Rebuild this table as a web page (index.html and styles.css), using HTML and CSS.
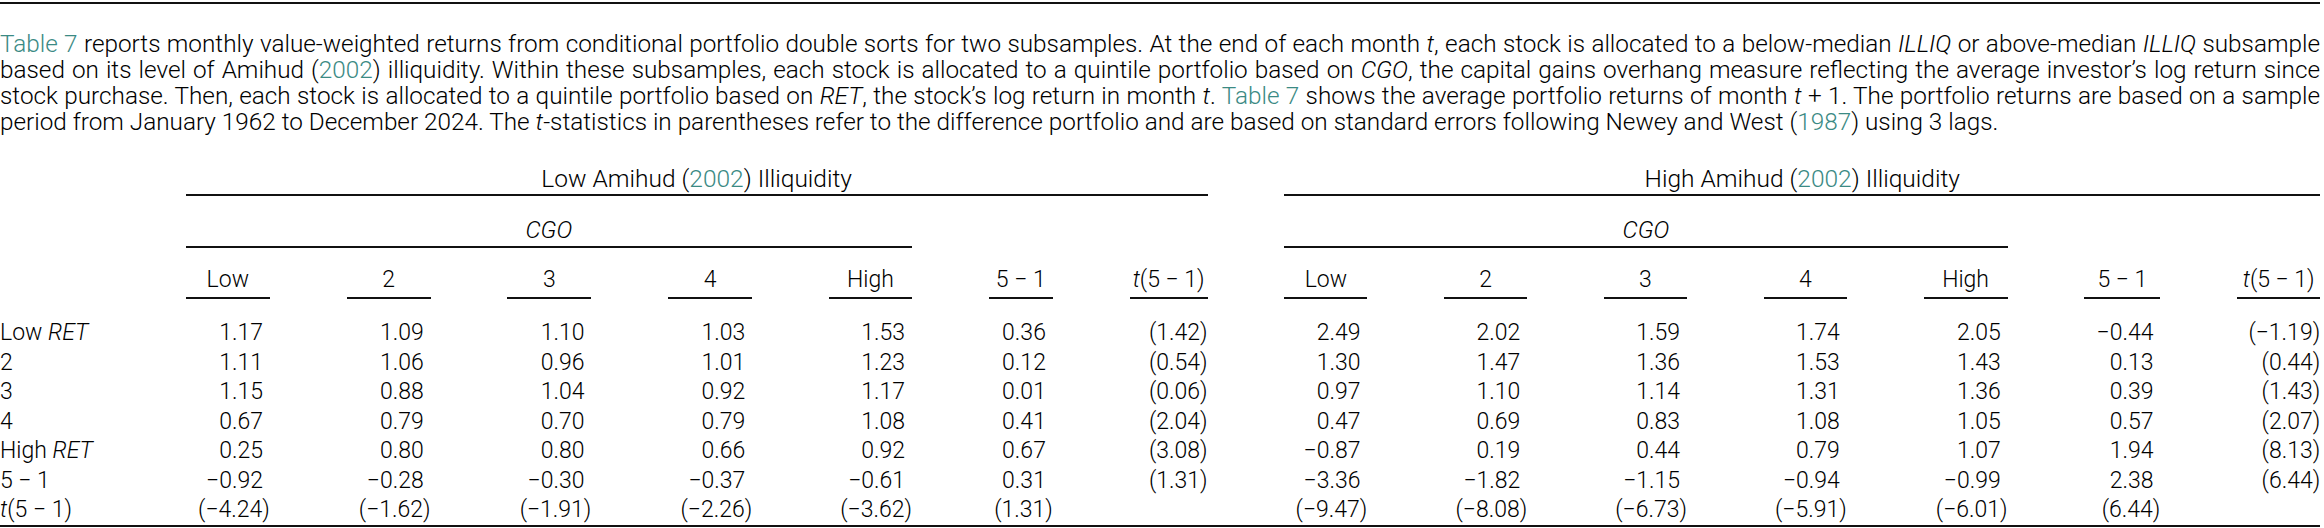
FILE: index.html
```html
<!DOCTYPE html>
<html lang="en">
<head>
<meta charset="utf-8">
<title>Table 7</title>
<link rel="stylesheet" href="styles.css">
</head>
<body>
<div class="page">
  <p class="caption">
    <span class="ln"><a class="ref">Table 7</a> reports monthly value-weighted returns from conditional portfolio double sorts for two subsamples. At the end of each month <i>t</i>, each stock is allocated to a below-median <i>ILLIQ</i> or above-median <i>ILLIQ</i> subsample</span>
    <span class="ln">based on its level of Amihud (<a class="ref">2002</a>) illiquidity. Within these subsamples, each stock is allocated to a quintile portfolio based on <i>CGO</i>, the capital gains overhang measure reflecting the average investor’s log return since</span>
    <span class="ln">stock purchase. Then, each stock is allocated to a quintile portfolio based on <i>RET</i>, the stock’s log return in month <i>t</i>. <a class="ref">Table 7</a> shows the average portfolio returns of month <i>t</i> + 1. The portfolio returns are based on a sample</span>
    <span class="ln last">period from January 1962 to December 2024. The <i>t</i>-statistics in parentheses refer to the difference portfolio and are based on standard errors following Newey and West (<a class="ref">1987</a>) using 3 lags.</span>
  </p>

  <div class="tbl">
    <div class="grp-row blank"></div>
    <div class="grp span-l">Low Amihud (<a class="ref">2002</a>) Illiquidity</div>
    <div class="grp span-r">High Amihud (<a class="ref">2002</a>) Illiquidity</div>

    <div class="cgo-row blank"></div>
    <div class="cgo cgo-l"><i>CGO</i></div>
    <div class="cgo-row blank gap-l"></div>
    <div class="cgo cgo-r"><i>CGO</i></div>
    <div class="cgo-row blank gap-r"></div>

    <div class="hd-row blank"></div>
    <div class="hd">Low</div><div class="hd">2</div><div class="hd">3</div><div class="hd">4</div><div class="hd">High</div><div class="hd">5 − 1</div><div class="hd"><i>t</i>(5 − 1)</div>
    <div class="hd">Low</div><div class="hd">2</div><div class="hd">3</div><div class="hd">4</div><div class="hd">High</div><div class="hd">5 − 1</div><div class="hd"><i>t</i>(5 − 1)</div>

    <div class="lb first">Low <i>RET</i></div>
    <div class="n first">1.17</div><div class="n first">1.09</div><div class="n first">1.10</div><div class="n first">1.03</div><div class="n first">1.53</div><div class="n first">0.36</div><div class="n pr first">(1.42)</div>
    <div class="n first">2.49</div><div class="n first">2.02</div><div class="n first">1.59</div><div class="n first">1.74</div><div class="n first">2.05</div><div class="n first">−0.44</div><div class="n pr first">(−1.19)</div>

    <div class="lb">2</div>
    <div class="n">1.11</div><div class="n">1.06</div><div class="n">0.96</div><div class="n">1.01</div><div class="n">1.23</div><div class="n">0.12</div><div class="n pr">(0.54)</div>
    <div class="n">1.30</div><div class="n">1.47</div><div class="n">1.36</div><div class="n">1.53</div><div class="n">1.43</div><div class="n">0.13</div><div class="n pr">(0.44)</div>

    <div class="lb">3</div>
    <div class="n">1.15</div><div class="n">0.88</div><div class="n">1.04</div><div class="n">0.92</div><div class="n">1.17</div><div class="n">0.01</div><div class="n pr">(0.06)</div>
    <div class="n">0.97</div><div class="n">1.10</div><div class="n">1.14</div><div class="n">1.31</div><div class="n">1.36</div><div class="n">0.39</div><div class="n pr">(1.43)</div>

    <div class="lb">4</div>
    <div class="n">0.67</div><div class="n">0.79</div><div class="n">0.70</div><div class="n">0.79</div><div class="n">1.08</div><div class="n">0.41</div><div class="n pr">(2.04)</div>
    <div class="n">0.47</div><div class="n">0.69</div><div class="n">0.83</div><div class="n">1.08</div><div class="n">1.05</div><div class="n">0.57</div><div class="n pr">(2.07)</div>

    <div class="lb">High <i>RET</i></div>
    <div class="n">0.25</div><div class="n">0.80</div><div class="n">0.80</div><div class="n">0.66</div><div class="n">0.92</div><div class="n">0.67</div><div class="n pr">(3.08)</div>
    <div class="n">−0.87</div><div class="n">0.19</div><div class="n">0.44</div><div class="n">0.79</div><div class="n">1.07</div><div class="n">1.94</div><div class="n pr">(8.13)</div>

    <div class="lb">5 − 1</div>
    <div class="n">−0.92</div><div class="n">−0.28</div><div class="n">−0.30</div><div class="n">−0.37</div><div class="n">−0.61</div><div class="n">0.31</div><div class="n pr">(1.31)</div>
    <div class="n">−3.36</div><div class="n">−1.82</div><div class="n">−1.15</div><div class="n">−0.94</div><div class="n">−0.99</div><div class="n">2.38</div><div class="n pr">(6.44)</div>

    <div class="lb"><i>t</i>(5 − 1)</div>
    <div class="n pr">(−4.24)</div><div class="n pr">(−1.62)</div><div class="n pr">(−1.91)</div><div class="n pr">(−2.26)</div><div class="n pr">(−3.62)</div><div class="n pr">(1.31)</div><div class="n pr"></div>
    <div class="n pr">(−9.47)</div><div class="n pr">(−8.08)</div><div class="n pr">(−6.73)</div><div class="n pr">(−5.91)</div><div class="n pr">(−6.01)</div><div class="n pr">(6.44)</div><div class="n pr"></div>
  </div>
</div>
</body>
</html>
```

FILE: styles.css
```css
html, body {
  margin: 0;
  padding: 0;
  background: #ffffff;
}

body {
  font-family: Roboto, "Liberation Sans", Arial, sans-serif;
  font-weight: 300;
  color: #000000;
}

.page {
  width: 2320px;
  margin-top: 2px;
  border-top: 2px solid #111;
}

.caption {
  margin: 0;
  padding-top: 26.6px;
  font-size: 24.3px;
  line-height: 26px;
}

.caption .ln {
  display: block;
  text-align: justify;
  text-align-last: justify;
}

.caption .ln.last {
  text-align-last: left;
}

.ref {
  color: #3b8a84;
  text-decoration: none;
}

.tbl {
  display: grid;
  grid-template-columns: 109px 84px 84px 84px 84px 83px 64px 78px 83px 83px 83px 83px 84px 76px 83px;
  column-gap: 76.8px;
  margin-top: 31px;
  font-size: 23px;
  border-bottom: 2px solid #111;
}

.blank {
  min-height: 1px;
}

.grp {
  font-size: 24.5px;
  line-height: 26px;
  text-align: center;
  padding-bottom: 2px;
  border-bottom: 2px solid #111;
}

.span-l { grid-column: 2 / 9; }
.span-r { grid-column: 9 / 16; }

.cgo {
  margin-top: 21px;
  font-size: 24px;
  line-height: 26px;
  text-align: center;
  padding-bottom: 3px;
  border-bottom: 2px solid #111;
}

.cgo-l { grid-column: 2 / 7; }
.gap-l { grid-column: 7 / 9; }
.cgo-r { grid-column: 9 / 14; }
.gap-r { grid-column: 14 / 16; }

.hd {
  margin-top: 19px;
  line-height: 26px;
  text-align: center;
  padding-bottom: 4px;
  border-bottom: 2px solid #111;
  white-space: nowrap;
}

.lb,
.n {
  line-height: 29.5px;
  white-space: nowrap;
}

.first {
  margin-top: 19.5px;
}

.n {
  text-align: right;
  padding-right: 0.3em;
}

.n.pr {
  padding-right: 0;
}
```
